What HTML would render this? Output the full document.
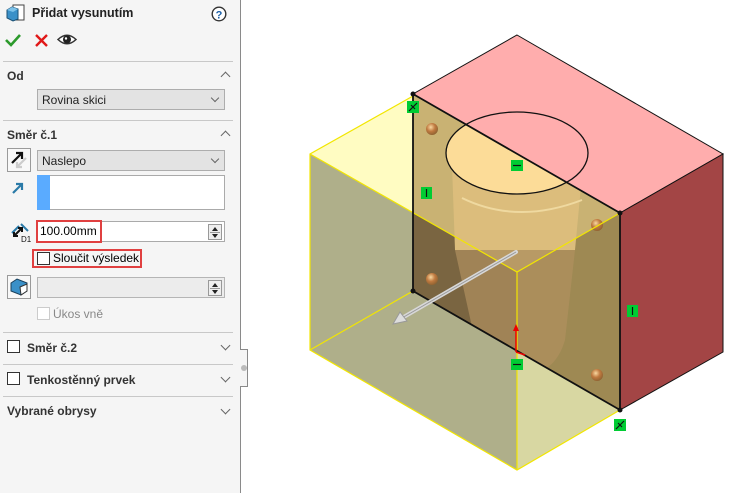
<!DOCTYPE html>
<html><head><meta charset="utf-8">
<style>
*{margin:0;padding:0;box-sizing:border-box}
body{width:750px;height:493px;background:#fff;position:relative;overflow:hidden;font-family:"Liberation Sans",sans-serif;font-size:12px;color:#222}
.panel{position:absolute;left:0;top:0;width:241px;height:493px;background:#f5f5f5;border-right:1px solid #8a8a8a}
.tab{position:absolute;left:240px;top:349px;width:8px;height:38px;background:#f5f5f5;border:1px solid #8a8a8a;border-left:none}
.tab i{position:absolute;left:1px;top:15px;width:6px;height:6px;border-radius:50%;background:#bbb}
.a{position:absolute}
.sep{position:absolute;left:3px;width:230px;height:1px;background:#c8c8c8}
.b{font-weight:bold;color:#333}
.dd{position:absolute;left:37px;width:188px;height:21px;background:#e3e3e3;border:1px solid #adadad;padding:3px 4px;font-size:12px}
.chev{position:absolute;width:7px;height:7px;border-right:1.5px solid #666;border-bottom:1.5px solid #666}
.down{transform:rotate(45deg)}
.up{transform:rotate(-135deg)}
.cb{position:absolute;width:13px;height:13px;border:1px solid #333;background:#fff}
.ib{position:absolute;left:7px;width:24px;height:24px;border:1px solid #9a9a9a;background:#f8f8f8}
.spin{position:absolute;right:2px;top:2px;width:14px;height:16px;border:1px solid #999;background:#eee}
.spin:before{content:"";position:absolute;left:3px;top:2px;border:3px solid transparent;border-bottom:4px solid #222;border-top:none}
.spin:after{content:"";position:absolute;left:3px;top:9px;border:3px solid transparent;border-top:4px solid #222;border-bottom:none}
.spin i{position:absolute;left:1px;right:1px;top:7px;height:1px;background:#999}
</style></head><body>
<div class="panel">
 <svg class="a" style="left:6px;top:4px" width="20" height="18" viewBox="0 0 20 18">
  <rect x="7" y="1" width="11" height="15" fill="#fff" stroke="#444"/>
  <polygon points="1,6 6,3 12,5 12,15 7,17 1,14" fill="#3a90c8" stroke="#1a4f73"/>
  <polygon points="1,6 6,3 12,5 7,8" fill="#7cc2ea"/>
 </svg>
 <div class="a b" style="left:32px;top:6px;font-size:12.5px;color:#222">Přidat vysunutím</div>
 <svg class="a" style="left:211px;top:6px" width="16" height="16"><circle cx="8" cy="8" r="6.8" fill="#fff" stroke="#333" stroke-width="1.4"/><text x="8" y="12.3" text-anchor="middle" font-family="Liberation Sans" font-weight="bold" font-size="11" fill="#1a5fa8">?</text></svg>
 <svg class="a" style="left:5px;top:33px" width="16" height="14"><path d="M1 7 L6 12 L15 2" stroke="#2c9a2c" stroke-width="2.6" fill="none"/></svg>
 <svg class="a" style="left:35px;top:34px" width="13" height="13"><path d="M1 1L12 12M12 1L1 12" stroke="#e01818" stroke-width="2.4"/></svg>
 <svg class="a" style="left:57px;top:33px" width="20" height="13"><path d="M1 6.5 Q10 -2 19 6.5 Q10 15 1 6.5Z" fill="#fff" stroke="#333" stroke-width="1.5"/><circle cx="10" cy="6.5" r="4" fill="#222"/><circle cx="9" cy="5.5" r="1.2" fill="#fff"/></svg>
 <div class="sep" style="top:61px"></div>
 <div class="a b" style="left:7px;top:69px">Od</div>
 <div class="chev up" style="left:222px;top:73px"></div>
 <div class="dd" style="top:89px">Rovina skici<div class="chev down" style="right:6px;top:5px;width:6px;height:6px;border-width:1px"></div></div>
 <div class="sep" style="top:120px"></div>
 <div class="a b" style="left:7px;top:128px">Směr č.1</div>
 <div class="chev up" style="left:222px;top:132px"></div>
 <div class="ib" style="top:148px"><svg width="22" height="22"><path d="M4 14 L14 4 M8 4 H14 V10" stroke="#111" stroke-width="2.2" fill="none"/><path d="M18 9 L9 18 M9 13 V18 H14" stroke="#ccc" stroke-width="2.2" fill="none"/></svg></div>
 <div class="dd" style="top:150px">Naslepo<div class="chev down" style="right:6px;top:5px;width:6px;height:6px;border-width:1px"></div></div>
 <svg class="a" style="left:10px;top:180px" width="16" height="16"><path d="M3 13 L12 4 M6 4 H12 V10" stroke="#2a7aa8" stroke-width="2.2" fill="none"/></svg>
 <div class="a" style="left:37px;top:175px;width:188px;height:35px;background:#fff;border:1px solid #aaa"></div>
 <div class="a" style="left:37px;top:175px;width:13px;height:35px;background:#5aabff"></div>
 <svg class="a" style="left:9px;top:221px" width="22" height="22"><path d="M3 12 L10 5 M12 3 L19 10" stroke="#2a7aa8" stroke-width="2"/><path d="M5 15 L13 7 M5 11 V15 H9 M13 11 V7 H9" stroke="#111" stroke-width="2" fill="none"/><text x="12" y="21" font-size="8" font-family="Liberation Sans" fill="#111">D1</text></svg>
 <div class="a" style="left:37px;top:221px;width:188px;height:21px;background:#fff;border:1px solid #aaa"><div class="spin"><i></i></div></div>
 <div class="a" style="left:36px;top:220px;width:66px;height:23px;border:2px solid #e04040;padding:2px 2px;font-size:12px;color:#000">100.00mm</div>
 <div class="a" style="left:32px;top:249px;width:110px;height:19px;border:2px solid #e04040"></div>
 <div class="cb" style="left:37px;top:252px"></div>
 <div class="a" style="left:53px;top:251px;color:#000">Sloučit výsledek</div>
 <div class="ib" style="top:275px"><svg width="22" height="22"><polygon points="3,7 9,3 19,7 19,15 13,19 3,15" fill="#3a90c8" stroke="#1a3f5a"/><polygon points="12,11 19,8 19,15 13,19" fill="#fff" stroke="#333"/></svg></div>
 <div class="a" style="left:37px;top:277px;width:188px;height:21px;background:#ececec;border:1px solid #b5b5b5"><div class="spin"><i></i></div></div>
 <div class="cb" style="left:37px;top:307px;border-color:#ccc"></div>
 <div class="a" style="left:53px;top:307px;color:#888">Úkos vně</div>
 <div class="sep" style="top:332px"></div>
 <div class="cb" style="left:7px;top:340px"></div>
 <div class="a b" style="left:27px;top:341px">Směr č.2</div>
 <div class="chev down" style="left:222px;top:342px"></div>
 <div class="sep" style="top:364px"></div>
 <div class="cb" style="left:7px;top:372px"></div>
 <div class="a b" style="left:27px;top:373px">Tenkostěnný prvek</div>
 <div class="chev down" style="left:222px;top:374px"></div>
 <div class="sep" style="top:396px"></div>
 <div class="a b" style="left:7px;top:404px">Vybrané obrysy</div>
 <div class="chev down" style="left:222px;top:406px"></div>
</div>
<div class="tab"><i></i></div>

<svg class="a" style="left:0;top:0" width="750" height="493">
 <defs>
  <clipPath id="pl"><polygon points="413,94 620,213 620,410 413,291"/></clipPath>
  <radialGradient id="bo" cx="0.4" cy="0.35" r="0.7"><stop offset="0" stop-color="#f8d8a0"/><stop offset="0.5" stop-color="#c07a40"/><stop offset="1" stop-color="#8a6030"/></radialGradient>
 </defs>
 <polygon points="517,35 723,154 620,213 413,94" fill="#ffadad" stroke="#111" stroke-width="1"/>
 <polygon points="620,213 723,154 723,352 620,410" fill="#a34545" stroke="#111" stroke-width="1"/>
 <polygon points="310,154 413,96 620,213 517,272" fill="#fffcc2"/>
 <polygon points="310,154 517,272 517,470 310,350" fill="#afaf8a"/>
 <polygon points="517,272 620,213 620,410 517,470" fill="#d8d7a2"/>
 <polygon points="413,94 620,213 517,272 413,213" fill="#c9b273"/>
 <polygon points="413,213 517,272 517,351 413,291" fill="#7a6541"/>
 <polygon points="517,272 620,213 620,410 517,351" fill="#9e8953"/>
 <g clip-path="url(#pl)">
  <path d="M452,165 Q517,205 583,165 L575,250 L455,250 Z" fill="#dcbd7c"/>
  <path d="M455,250 L575,250 L565,340 Q555,375 520,376 Q482,375 476,345 Z" fill="#b09060" opacity="0.7"/>
  <path d="M462,198 Q517,225 582,200" stroke="#efd9a0" stroke-width="2" fill="none"/>
  <ellipse cx="517" cy="153" rx="71" ry="41" fill="#fcdc98"/>
 </g>
 <ellipse cx="517" cy="153" rx="71" ry="41" fill="none" stroke="#111" stroke-width="1.3"/>
 <g fill="url(#bo)"><circle cx="432" cy="129" r="6"/><circle cx="432" cy="279" r="6"/><circle cx="597" cy="225" r="6"/><circle cx="597" cy="375" r="6"/></g>
 <g stroke="#f2e600" stroke-width="1.2" fill="none">
  <polyline points="413,96 310,154 310,350 517,470 620,410"/>
  <polyline points="310,154 517,272 620,213"/>
  <line x1="517" y1="272" x2="517" y2="470"/>
  <line x1="413" y1="291" x2="310" y2="350"/>
 </g>
 <polygon points="413,94 620,213 620,410 413,291" fill="none" stroke="#111" stroke-width="1.8"/>
 <g fill="#111"><circle cx="413" cy="94" r="2.5"/><circle cx="620" cy="213" r="2.5"/><circle cx="620" cy="410" r="2.5"/><circle cx="413" cy="291" r="2.5"/></g>
 <line x1="516" y1="252" x2="402" y2="318" stroke="#d8d8d8" stroke-width="4" stroke-linecap="round"/>
 <line x1="516" y1="252" x2="402" y2="318" stroke="#999" stroke-width="1" />
 <polygon points="393,324 400,312 407,321" fill="#ddd" stroke="#999"/>
 <line x1="516" y1="352" x2="516" y2="328" stroke="#e00" stroke-width="1.5"/>
 <polygon points="513,331 516,324 519,331" fill="#e00"/>
 <line x1="516" y1="352" x2="525" y2="355" stroke="#e00" stroke-width="1.5"/>
 <g fill="#00cc33">
  <rect x="407" y="101" width="12" height="12"/><rect x="511" y="160" width="12" height="11"/>
  <rect x="421" y="187" width="11" height="12"/><rect x="627" y="305" width="11" height="12"/>
  <rect x="511" y="359" width="12" height="11"/><rect x="614" y="419" width="12" height="12"/>
 </g>
 <g stroke="#111" stroke-width="1.2">
  <line x1="513" y1="165.5" x2="521" y2="165.5"/><line x1="513" y1="364.5" x2="521" y2="364.5"/>
  <line x1="426.5" y1="189" x2="426.5" y2="197"/><line x1="632.5" y1="307" x2="632.5" y2="315"/>
  <path d="M409 111 L417 103 M411 105 L415 109" /><path d="M616 429 L624 421 M618 423 L622 427"/>
 </g>
</svg>
</body></html>
